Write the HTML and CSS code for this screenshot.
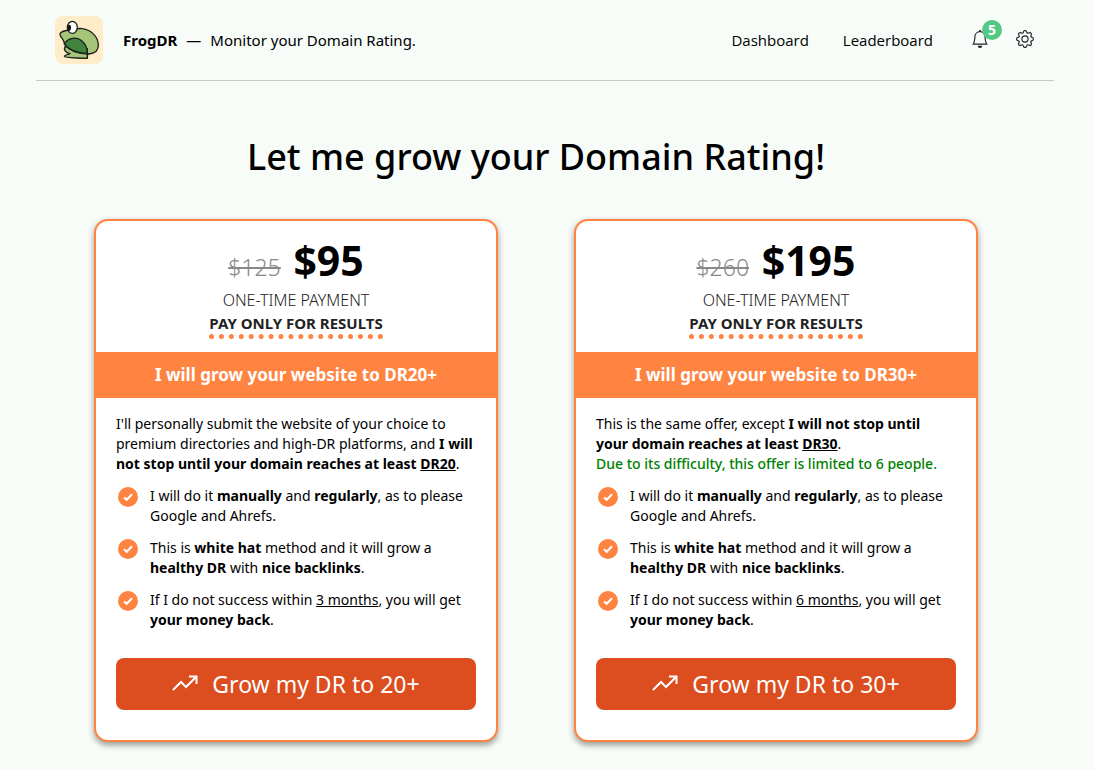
FILE: index.html
```html
<!DOCTYPE html>
<html lang="en">
<head>
    <meta charset="UTF-8">
    <meta name="viewport" content="width=device-width, initial-scale=1">
    <title>FrogDR</title>
    <link rel="stylesheet" href="styles.css">
</head>
<body>

    <!-- Header -->
    <header class="header">
        <a href="#" class="brand">
            <svg class="logo" viewBox="0 0 144 144" aria-hidden="true">
                <rect width="144" height="144" rx="24" fill="#ffedc9"/>
                <g stroke="#1c211b" stroke-width="4" stroke-linecap="round" stroke-linejoin="round">
                    <path d="M30 92C26 100 30 110 45 113C38 117 29 116 28 121C28 127 60 125 97 127C99 118 98 108 96 100Z" fill="#a6c47a"/>
                    <path d="M40 42C28 45 14 46 15 55C17 66 27 70 28 82C42 102 68 113 101 114C122 112 131 100 130 85C128 62 110 42 82 38C72 36 62 38 40 42Z" fill="#a6c47a"/>
                    <path d="M28 84C38 66 64 60 80 74C92 84 98 96 97 113C68 112 42 103 28 84Z" fill="#40833f"/>
                    <path d="M97 98L97 126" fill="none"/>
                    <ellipse cx="52" cy="34" rx="15" ry="18" fill="#fff"/>
                </g>
                <ellipse cx="43" cy="35" rx="5" ry="9" fill="#111"/>
            </svg>
            <span><b>FrogDR</b><span class="dash">—</span>Monitor your Domain Rating.</span>
        </a>
        <nav class="nav">
            <a href="#">Dashboard</a>
            <a href="#">Leaderboard</a>
            <div class="tools">
                <button type="button" class="icon-btn" aria-label="Notifications">
                    <svg viewBox="0 0 16 16" width="18" height="18" fill="currentColor"><path d="M8 16a2 2 0 0 0 2-2H6a2 2 0 0 0 2 2M8 1.918l-.797.161A4 4 0 0 0 4 6c0 .628-.134 2.197-.459 3.742-.16.767-.376 1.566-.663 2.258h10.244c-.287-.692-.502-1.49-.663-2.258C12.134 8.197 12 6.628 12 6a4 4 0 0 0-3.203-3.92zM14.22 12c.223.447.481.801.78 1H1c.299-.199.557-.553.78-1C2.68 10.2 3 6.88 3 6c0-2.42 1.72-4.44 4.005-4.901a1 1 0 1 1 1.99 0A5 5 0 0 1 13 6c0 .88.32 4.2 1.22 6"/></svg>
                    <span class="badge">5</span>
                </button>
                <button type="button" class="icon-btn" aria-label="Settings">
                    <svg viewBox="0 0 16 16" width="18" height="18" fill="currentColor"><path d="M8 4.754a3.246 3.246 0 1 0 0 6.492 3.246 3.246 0 0 0 0-6.492M5.754 8a2.246 2.246 0 1 1 4.492 0 2.246 2.246 0 0 1-4.492 0"/><path d="M9.796 1.343c-.527-1.79-3.065-1.79-3.592 0l-.094.319a.873.873 0 0 1-1.255.52l-.292-.16c-1.64-.892-3.433.902-2.54 2.541l.159.292a.873.873 0 0 1-.52 1.255l-.319.094c-1.79.527-1.79 3.065 0 3.592l.319.094a.873.873 0 0 1 .52 1.255l-.16.292c-.892 1.64.901 3.434 2.541 2.54l.292-.159a.873.873 0 0 1 1.255.52l.094.319c.527 1.79 3.065 1.79 3.592 0l.094-.319a.873.873 0 0 1 1.255-.52l.292.16c1.64.893 3.434-.902 2.54-2.541l-.159-.292a.873.873 0 0 1 .52-1.255l.319-.094c1.79-.527 1.79-3.065 0-3.592l-.319-.094a.873.873 0 0 1-.52-1.255l.16-.292c.893-1.64-.902-3.433-2.541-2.54l-.292.159a.873.873 0 0 1-1.255-.52zm-2.633.283c.246-.835 1.428-.835 1.674 0l.094.319a1.873 1.873 0 0 0 2.693 1.115l.291-.16c.764-.415 1.6.42 1.184 1.185l-.159.292a1.873 1.873 0 0 0 1.116 2.692l.318.094c.835.246.835 1.428 0 1.674l-.319.094a1.873 1.873 0 0 0-1.115 2.693l.16.291c.415.764-.42 1.6-1.185 1.184l-.291-.159a1.873 1.873 0 0 0-2.693 1.116l-.094.318c-.246.835-1.428.835-1.674 0l-.094-.319a1.873 1.873 0 0 0-2.692-1.115l-.292.16c-.764.415-1.6-.42-1.184-1.185l.159-.291A1.873 1.873 0 0 0 1.945 8.93l-.319-.094c-.835-.246-.835-1.428 0-1.674l.319-.094A1.873 1.873 0 0 0 3.06 4.377l-.16-.292c-.415-.764.42-1.6 1.185-1.184l.292.159a1.873 1.873 0 0 0 2.692-1.115z"/></svg>
                </button>
            </div>
        </nav>
    </header>

    <!-- Pricing -->
    <main>
        <h1>Let me grow your Domain Rating!</h1>

        <div class="plans">
            <section class="plan">
                <div class="plan-head">
                    <p class="price"><s>$125</s> <b>$95</b></p>
                    <p class="terms">ONE-TIME PAYMENT</p>
                    <p class="results">PAY ONLY FOR RESULTS</p>
                </div>
                <h2>I will grow your website to DR20+</h2>
                <div class="plan-body">
                    <p>I'll personally submit the website of your choice to<br>premium directories and high-DR platforms, and <b>I will<br>not stop until your domain reaches at least <u>DR20</u></b>.</p>
                    <ul>
                        <li>
                            <svg class="check" viewBox="0 0 20 20"><circle cx="10" cy="10" r="10"/><path d="M6 10.2L8.7 12.8L14 7.2"/></svg>
                            <span>I will do it <b>manually</b> and <b>regularly</b>, as to please<br>Google and Ahrefs.</span>
                        </li>
                        <li>
                            <svg class="check" viewBox="0 0 20 20"><circle cx="10" cy="10" r="10"/><path d="M6 10.2L8.7 12.8L14 7.2"/></svg>
                            <span>This is <b>white hat</b> method and it will grow a<br><b>healthy DR</b> with <b>nice backlinks</b>.</span>
                        </li>
                        <li>
                            <svg class="check" viewBox="0 0 20 20"><circle cx="10" cy="10" r="10"/><path d="M6 10.2L8.7 12.8L14 7.2"/></svg>
                            <span>If I do not success within <u>3 months</u>, you will get<br><b>your money back</b>.</span>
                        </li>
                    </ul>
                    <button type="button" class="buy">
                        <svg viewBox="0 0 26 26" width="26" height="26"><path d="M1 19L9 11L14 16L24 6M17 5.5H24.5V13"/></svg>
                        Grow my DR to 20+
                    </button>
                </div>
            </section>

            <section class="plan">
                <div class="plan-head">
                    <p class="price"><s>$260</s> <b>$195</b></p>
                    <p class="terms">ONE-TIME PAYMENT</p>
                    <p class="results">PAY ONLY FOR RESULTS</p>
                </div>
                <h2>I will grow your website to DR30+</h2>
                <div class="plan-body">
                    <p>This is the same offer, except <b>I will not stop until<br>your domain reaches at least <u>DR30</u></b>.<br><span class="limited">Due to its difficulty, this offer is limited to 6 people.</span></p>
                    <ul>
                        <li>
                            <svg class="check" viewBox="0 0 20 20"><circle cx="10" cy="10" r="10"/><path d="M6 10.2L8.7 12.8L14 7.2"/></svg>
                            <span>I will do it <b>manually</b> and <b>regularly</b>, as to please<br>Google and Ahrefs.</span>
                        </li>
                        <li>
                            <svg class="check" viewBox="0 0 20 20"><circle cx="10" cy="10" r="10"/><path d="M6 10.2L8.7 12.8L14 7.2"/></svg>
                            <span>This is <b>white hat</b> method and it will grow a<br><b>healthy DR</b> with <b>nice backlinks</b>.</span>
                        </li>
                        <li>
                            <svg class="check" viewBox="0 0 20 20"><circle cx="10" cy="10" r="10"/><path d="M6 10.2L8.7 12.8L14 7.2"/></svg>
                            <span>If I do not success within <u>6 months</u>, you will get<br><b>your money back</b>.</span>
                        </li>
                    </ul>
                    <button type="button" class="buy">
                        <svg viewBox="0 0 26 26" width="26" height="26"><path d="M1 19L9 11L14 16L24 6M17 5.5H24.5V13"/></svg>
                        Grow my DR to 30+
                    </button>
                </div>
            </section>
        </div>
    </main>

</body>
</html>
```

FILE: styles.css
```css
* {
    box-sizing: border-box;
}

body {
    margin: 0;
    font-family: 'Segoe UI', 'Noto Sans', sans-serif;
    font-size: 14px;
    line-height: 20px;
    background-color: #f7fcf8;
    color: #000;
}

h1, h2, p, ul {
    margin: 0;
    padding: 0;
}

.header {
    display: flex;
    justify-content: space-between;
    align-items: center;
    margin: 0 40px 0 36px;
    padding: 16px 20px 16px 19px;
    border-bottom: 1px solid #c8cbc8;
    font-size: 15px;
}

.header a {
    color: #000;
    text-decoration: none;
}

.brand {
    display: flex;
    align-items: center;
    gap: 20px;
}

.logo {
    width: 48px;
    height: 48px;
}

.dash {
    margin: 0 9px;
}

.nav {
    display: flex;
    align-items: center;
    gap: 34px;
    font-family: 'Segoe UI', 'Open Sans', sans-serif;
}

.tools {
    display: flex;
    gap: 27px;
    margin-left: 4px;
}

.icon-btn {
    position: relative;
    display: flex;
    padding: 0 0 2px;
    border: none;
    background: none;
    color: #222;
    cursor: pointer;
}

.badge {
    position: absolute;
    top: -10px;
    left: 11px;
    width: 20px;
    height: 20px;
    border-radius: 50%;
    background-color: #52c882;
    color: #fff;
    font: bold 14px/20px 'Segoe UI', 'Open Sans', sans-serif;
    text-align: center;
}

main {
    padding: 52px 58px 28px 36px;
}

h1 {
    font-size: 36px;
    font-weight: 500;
    line-height: 48px;
    text-align: center;
}

.plans {
    display: grid;
    grid-template-columns: 1fr 1fr;
    gap: 76px;
    max-width: 884px;
    margin: 38px auto 0;
}

.plan {
    overflow: hidden;
    border: 2px solid #ff8442;
    border-radius: 14px;
    background-color: #fff;
    box-shadow: 0 3px 6px rgba(0, 0, 0, 0.4);
}

.plan-head {
    display: flex;
    flex-direction: column;
    align-items: center;
    padding: 13px 20px;
}

.price {
    font-size: 41px;
    line-height: 53px;
}

.price s {
    margin-right: 2px;
    color: #888;
    font-size: 23px;
    font-weight: 300;
    line-height: 24px;
}

.terms {
    color: #222;
    font-size: 16px;
    font-weight: 300;
    line-height: 26px;
}

.results {
    border-bottom: 5px dotted #ff8442;
    color: #222;
    font-size: 15px;
    font-weight: 700;
    line-height: 21px;
}

.plan h2 {
    padding: 11px 20px;
    background-color: #ff8442;
    color: #fff;
    font-size: 17px;
    font-weight: 700;
    line-height: 24px;
    text-align: center;
}

.plan-body {
    padding: 16px 20px 30px;
}

.limited {
    color: green;
    font-weight: 500;
}

.plan ul {
    display: grid;
    gap: 12px;
    margin: 12px 0 28px;
    list-style: none;
}

.plan li {
    display: flex;
    gap: 12px;
    padding-left: 2px;
}

.check {
    flex: none;
    width: 20px;
    height: 20px;
    margin-top: 1px;
    fill: #ff8442;
}

.check path {
    fill: none;
    stroke: #fff;
    stroke-width: 2;
}

.buy {
    display: flex;
    justify-content: center;
    align-items: center;
    gap: 14px;
    width: 100%;
    padding: 10px;
    border: none;
    border-radius: 8px;
    background-color: #dc4d1f;
    color: #fff;
    font-family: inherit;
    font-size: 23px;
    line-height: 32px;
    cursor: pointer;
}

.buy svg {
    fill: none;
    stroke: #fff;
    stroke-width: 2;
}
```
